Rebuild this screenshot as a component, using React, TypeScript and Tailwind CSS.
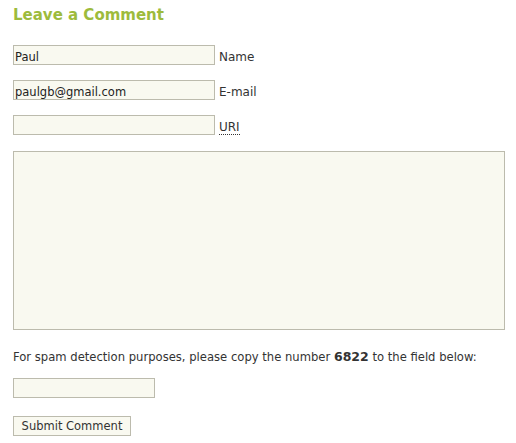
export default function App() {
  return (
    <div className="min-h-[443px] bg-white px-[13px] pt-[5px] text-[#333] [font-family:'DejaVu_Sans',Verdana,sans-serif]">
      <h3 className="text-[15px] font-bold leading-[20px] text-[#9dbb3c]">Leave a Comment</h3>
      <form className="mt-[20px] flex flex-col">
        <div className="flex h-[20px] items-center gap-[4px]">
          <input
            defaultValue="Paul"
            className="h-[20px] w-[202px] border border-[#bcbbad] bg-[#f9f9f0] px-[1px] pt-[3px] text-[11.5px] leading-[14px] text-[#222] outline-none"
          />
          <label className="translate-y-[2px] text-[12px]">Name</label>
        </div>
        <div className="mt-[15px] flex h-[20px] items-center gap-[4px]">
          <input
            defaultValue="paulgb@gmail.com"
            className="h-[20px] w-[202px] border border-[#bcbbad] bg-[#f9f9f0] px-[1px] pt-[3px] text-[11.5px] leading-[14px] text-[#222] outline-none"
          />
          <label className="translate-y-[2px] text-[12px]">E-mail</label>
        </div>
        <div className="mt-[15px] flex h-[20px] items-center gap-[4px]">
          <input className="h-[20px] w-[202px] border border-[#bcbbad] bg-[#f9f9f0] px-[1px] text-[11px] outline-none" />
          <label className="translate-y-[2px] text-[12px]">
            <abbr className="border-b border-dotted border-[#333] no-underline">URI</abbr>
          </label>
        </div>
        <textarea className="mt-[16px] h-[179px] w-[492px] resize-none border border-[#bcbbad] bg-[#f9f9f0] outline-none" />
        <p className="mt-[19px] text-[11.6px] leading-[16px]">
          For spam detection purposes, please copy the number <strong className="text-[12.5px] font-bold">6822</strong> to the field below:
        </p>
        <input className="mt-[13px] h-[20px] w-[142px] border border-[#bcbbad] bg-[#f9f9f0] outline-none" />
        <div className="mt-[15px]">
          <button
            type="button"
            className="h-[20px] w-[118px] border border-[#bcbbad] bg-[#f9f9f0] text-[11.5px] leading-[18px] text-[#333]"
          >
            Submit Comment
          </button>
        </div>
      </form>
    </div>
  );
}
